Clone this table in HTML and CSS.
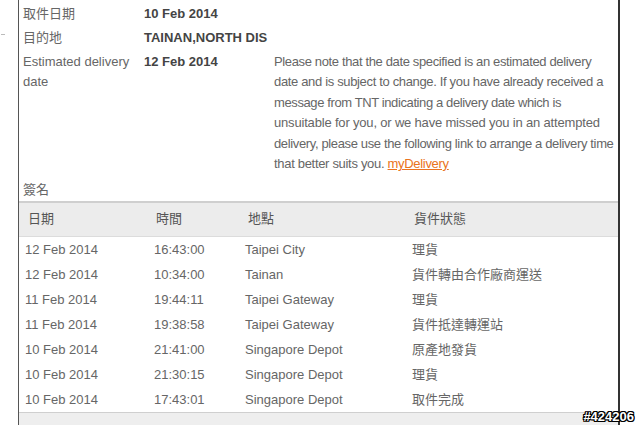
FILE: index.html
```html
<!DOCTYPE html>
<html>
<head>
<meta charset="utf-8">
<link rel="stylesheet" href="styles.css">
</head>
<body>
<div class="page">
  <span class="tick"></span>
  <div class="frame">
    <div class="info">
      <div class="row">
        <div class="label">取件日期</div>
        <div class="value">10 Feb 2014</div>
        <div class="note"></div>
      </div>
      <div class="row">
        <div class="label">目的地</div>
        <div class="value">TAINAN,NORTH DIS</div>
        <div class="note"></div>
      </div>
      <div class="row row-note">
        <div class="label">Estimated delivery date</div>
        <div class="value">12 Feb 2014</div>
        <div class="note"><span class="ln ln1">Please note that the date specified is an estimated delivery</span><br><span class="ln ln2">date and is subject to change. If you have already received a</span><br><span class="ln ln3">message from TNT indicating a delivery date which is</span><br><span class="ln ln4">unsuitable for you, or we have missed you in an attempted</span><br><span class="ln ln5">delivery, please use the following link to arrange a delivery time</span><br><span class="ln ln6">that better suits you. <a class="link" href="#">myDelivery</a></span></div>
      </div>
      <div class="sig">簽名</div>
    </div>
    <table class="events">
      <thead>
        <tr><th class="c-date">日期</th><th class="c-time">時間</th><th class="c-loc">地點</th><th class="c-status">貨件狀態</th></tr>
      </thead>
      <tbody>
        <tr><td>12 Feb 2014</td><td>16:43:00</td><td>Taipei City</td><td>理貨</td></tr>
        <tr><td>12 Feb 2014</td><td>10:34:00</td><td>Tainan</td><td>貨件轉由合作廠商運送</td></tr>
        <tr><td>11 Feb 2014</td><td>19:44:11</td><td>Taipei Gateway</td><td>理貨</td></tr>
        <tr><td>11 Feb 2014</td><td>19:38:58</td><td>Taipei Gateway</td><td>貨件抵達轉運站</td></tr>
        <tr><td>10 Feb 2014</td><td>21:41:00</td><td>Singapore Depot</td><td>原產地發貨</td></tr>
        <tr><td>10 Feb 2014</td><td>21:30:15</td><td>Singapore Depot</td><td>理貨</td></tr>
        <tr><td>10 Feb 2014</td><td>17:43:01</td><td>Singapore Depot</td><td>取件完成</td></tr>
      </tbody>
    </table>
    <div class="foot"></div>
  </div>
  <div class="stamp">#424206</div>
</div>
</body>
</html>
```
FILE: styles.css
```css
html, body {
  margin: 0;
  padding: 0;
  background: #fff;
}
.page {
  position: relative;
  width: 640px;
  height: 425px;
  overflow: hidden;
  font-family: "Liberation Sans", Arial, "Noto Sans CJK TC", sans-serif;
  font-size: 13px;
  color: #666;
}
.tick {
  position: absolute;
  left: 1px;
  top: 34px;
  width: 4px;
  height: 1px;
  background: #bbb;
}
.frame {
  margin-left: 18px;
  width: 599px;
  height: 425px;
  border-left: 1px solid #555;
  border-right: 2px solid #333;
  display: flex;
  flex-direction: column;
}
.info {
  padding-top: 2px;
}
.row {
  display: grid;
  grid-template-columns: 125px 126px 1fr;
  padding: 2px 0;
  line-height: 20px;
}
.label {
  padding-left: 4px;
  padding-right: 4px;
}
.value {
  font-weight: bold;
  color: #444;
}
.row-note {
  line-height: 20.4px;
  padding-bottom: 5px;
}
.note {
  padding-left: 4px;
  padding-right: 0;
  white-space: nowrap;
}
.ln1 { letter-spacing: -0.36px; }
.ln2 { letter-spacing: -0.34px; }
.ln3 { letter-spacing: -0.39px; }
.ln4 { letter-spacing: -0.18px; }
.ln5 { letter-spacing: -0.36px; }
.ln6 { letter-spacing: -0.31px; }
.link {
  color: #ea7320;
  text-decoration: underline;
}
.sig {
  padding: 1px 0 1px 4px;
  line-height: 20px;
}
.events {
  width: 100%;
  border-collapse: collapse;
  border-top: 2px solid #cfcfcf;
}
.events th {
  background: #ececec;
  font-weight: normal;
  text-align: left;
  color: #555;
  padding: 6px 0 7px 0;
  line-height: 20px;
  height: 20px;
  border-bottom: 1px solid #dcdcdc;
}
.events th.c-date { padding-left: 9px; width: 125px; }
.events th.c-time { padding-left: 3px; width: 89px; }
.events th.c-loc { padding-left: 3px; width: 164px; }
.events th.c-status { padding-left: 2px; }
.events td {
  padding: 4px 0 4px 0;
  line-height: 17px;
  white-space: nowrap;
}
.events td:nth-child(1) { padding-left: 6px; }
.events td:nth-child(2) { padding-left: 1px; }
.events td:nth-child(3) { padding-left: 0; }
.events td:nth-child(4) { padding-left: 0; }
.events tbody tr:last-child td {
  border-bottom: 1px solid #cfcfcf;
}
.foot {
  flex: 1;
  background: #eeeeee;
}
.stamp {
  position: absolute;
  right: 6px;
  bottom: 2px;
  font-family: "Liberation Sans", Arial, sans-serif;
  font-weight: bold;
  font-size: 13px;
  line-height: 13px;
  color: #fff;
  text-shadow: 1px 0 0 #000, -1px 0 0 #000, 0 1px 0 #000, 0 -1px 0 #000, 1px 1px 0 #000, -1px -1px 0 #000, 1px -1px 0 #000, -1px 1px 0 #000;
}
```
